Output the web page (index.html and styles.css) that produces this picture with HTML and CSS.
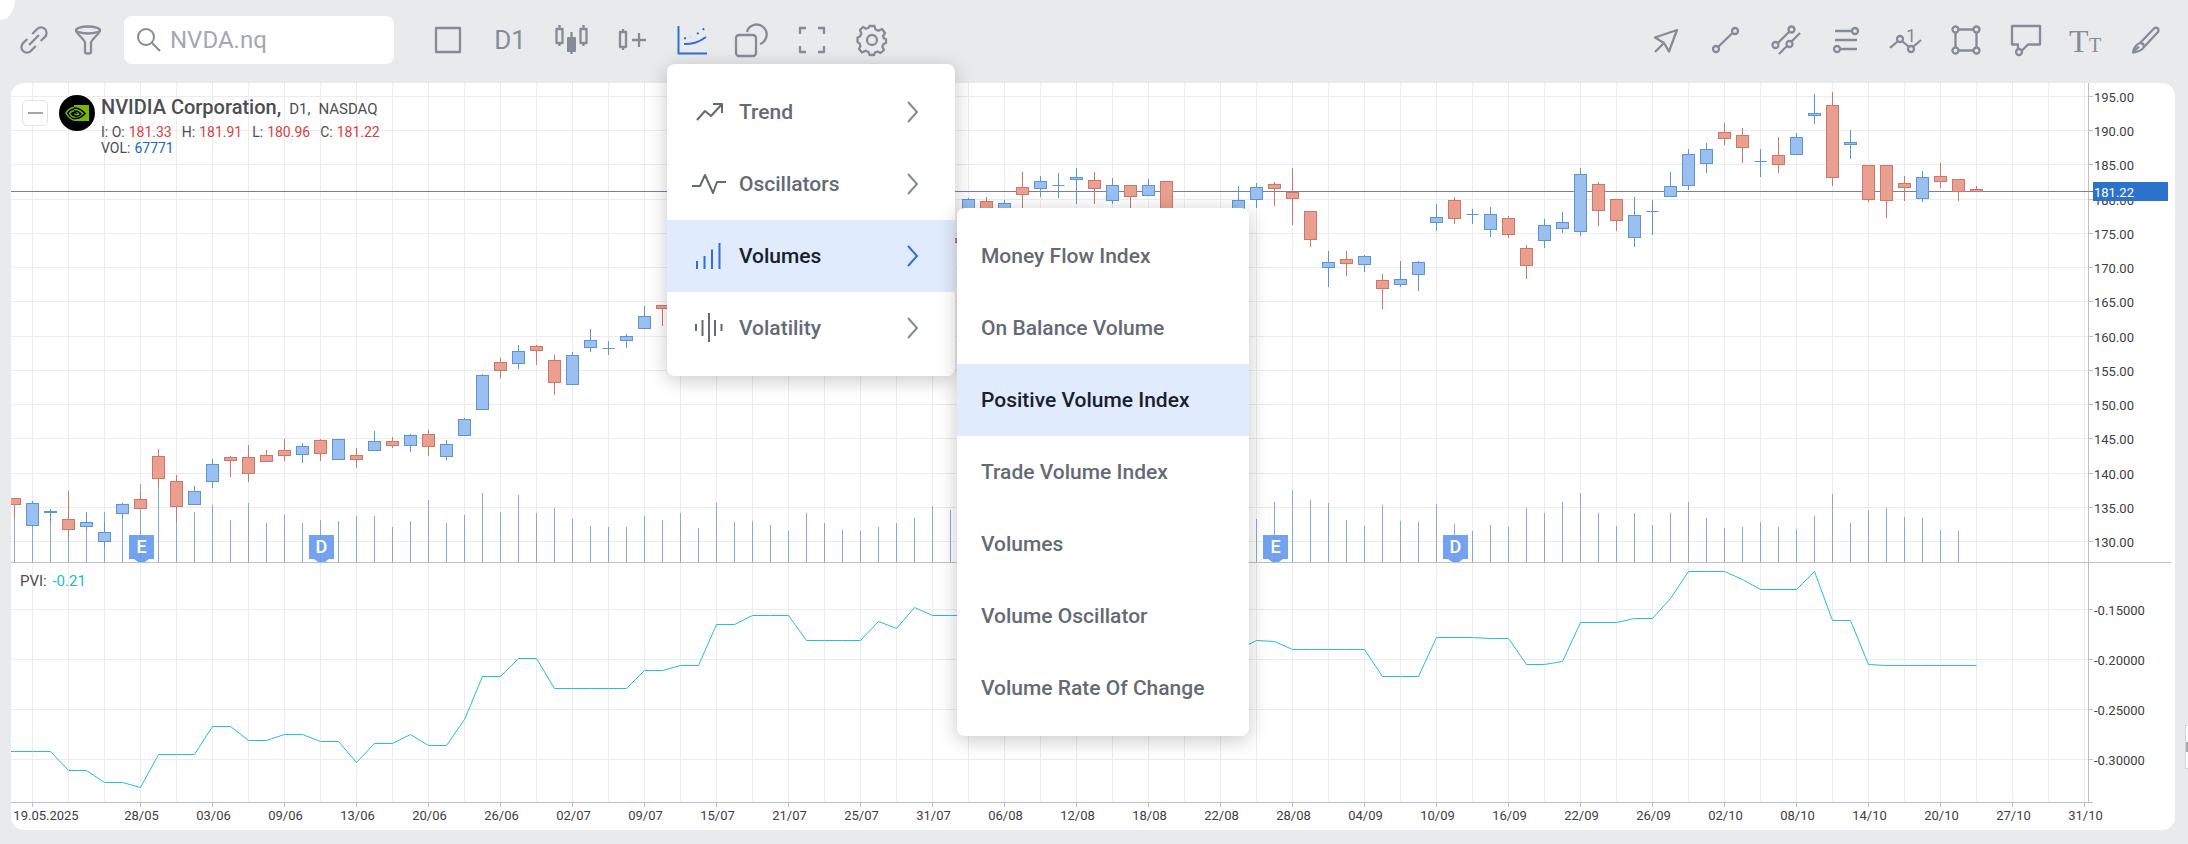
FILE: index.html
```
<!DOCTYPE html>
<html lang="en">
<head>
    <meta charset="UTF-8">
    <title>NVDA.nq chart</title>
    <link rel="stylesheet" href="styles.css">
</head>
<body>
    <div class="corner"></div>

    <header class="toolbar">
        <button class="tool tool-small" aria-label="Link">
            <svg class="icon" width="36" height="36"><g transform="rotate(-45 18 18)"><path d="M14 12.500H8a5.500 5.500 0 0 0 0 11h7M21 12.500h7a5.500 5.500 0 0 1 0 11h-6M11 18h14"/></g></svg>
        </button>
        <button class="tool tool-small" aria-label="Filter">
            <svg class="icon" width="36" height="36"><ellipse cx="18" cy="8" rx="12" ry="3.500"/><path d="M6 8c0 4 9 9 9 13v9c0 2 6 2 6 0V21c0-4 9-9 9-13"/></svg>
        </button>
        <label class="search">
            <svg class="icon" width="26" height="26"><circle cx="10" cy="10" r="8"/><path d="M15.500 15.500l8.500 8.500"/></svg>
            <input type="text" placeholder="NVDA.nq" aria-label="Symbol">
        </label>
        <button class="tool" aria-label="Layout">
            <svg class="icon" width="36" height="36"><path d="M6 6h24v24H6z"/></svg>
        </button>
        <button class="tool tool-period">D1</button>
        <button class="tool" aria-label="Chart type">
            <svg class="icon" width="36" height="36"><path d="M2.500 7h6v14h-6zM5.500 3v4M5.500 21v3M26.500 7h6v14h-6zM29.500 3v4M29.500 21v3M17.500 10v22"/><rect class="solid" x="13" y="15" width="9" height="15" rx="1"/></svg>
        </button>
        <button class="tool" aria-label="New candle">
            <svg class="icon" width="36" height="36"><path d="M6 10h6v15H6zM9 7v3M9 25v3M18 18h14M25 11v14"/></svg>
        </button>
        <div class="menu-anchor">
            <button class="tool tool-active" aria-label="Indicators">
                <svg class="icon" width="36" height="36"><path d="M4.500 4v27.500H33"/><path d="M10 22c8 0 14-1 22-7"/><path class="dots" d="M10 16.500L17 15M23 12L31 6"/></svg>
            </button>
            <nav class="menu">
                <button class="menu-item">
                    <svg class="icon" width="36" height="32"><path d="M6 24l8-9 6 5 11-12M22 8h9v9"/></svg>
                    <span>Trend</span>
                    <svg class="chevron" width="12" height="22"><path d="M1 1l9 10-9 10"/></svg>
                </button>
                <button class="menu-item">
                    <svg class="icon" width="36" height="32"><path d="M1 18h8l5-11 8 18 4-11h9"/></svg>
                    <span>Oscillators</span>
                    <svg class="chevron" width="12" height="22"><path d="M1 1l9 10-9 10"/></svg>
                </button>
                <button class="menu-item selected">
                    <svg class="icon" width="36" height="32"><path d="M6 21v8M13.500 16v13M21 9.500V29M28.500 3v26"/></svg>
                    <span>Volumes</span>
                    <svg class="chevron" width="12" height="22"><path d="M1 1l9 10-9 10"/></svg>
                </button>
                <button class="menu-item">
                    <svg class="icon" width="36" height="32"><path d="M5 12v7M11.500 8v16M18 1v29M24 8v16M30.500 12v7"/></svg>
                    <span>Volatility</span>
                    <svg class="chevron" width="12" height="22"><path d="M1 1l9 10-9 10"/></svg>
                </button>

                <div class="menu submenu">
                    <button class="menu-item">Money Flow Index</button>
                    <button class="menu-item">On Balance Volume</button>
                    <button class="menu-item selected">Positive Volume Index</button>
                    <button class="menu-item">Trade Volume Index</button>
                    <button class="menu-item">Volumes</button>
                    <button class="menu-item">Volume Oscillator</button>
                    <button class="menu-item">Volume Rate Of Change</button>
                </div>
            </nav>
        </div>
        <button class="tool" aria-label="Shapes">
            <svg class="icon" width="36" height="36"><rect x="2" y="13" width="20" height="21" rx="3"/><path d="M13 10a10 10 0 1 1 13 12"/></svg>
        </button>
        <button class="tool" aria-label="Fullscreen">
            <svg class="icon" width="36" height="36"><path d="M6 12V6h6M24 6h6v6M30 24v6h-6M12 30H6v-6"/></svg>
        </button>
        <button class="tool" aria-label="Settings">
            <svg class="icon" width="36" height="36"><circle cx="18" cy="18" r="5"/><path d="M15.500 4h5l1 3.500 3 1.300L28 7l3 4-2 3 1 2.500 2 .5v4l-2.500 1-1.200 2.800L30 28l-3.500 3-3-1.500-2.500 1L20 33h-4.500l-1-3-3-1.300L8 30.500 5 27l1.500-3-1-2.600L3.500 20v-4.500l2.500-1 1.300-3L6 8l3-3 3 1.700 2.600-1z"/></svg>
        </button>

        <div class="drawing-tools">
            <button class="tool" aria-label="Cursor">
                <svg class="icon" width="36" height="36"><path d="M7 30l9-9M16 21L7 15.500 29 8l-8 21.500z"/></svg>
            </button>
            <button class="tool" aria-label="Line">
                <svg class="icon" width="36" height="36"><path d="M10 25L24.500 11"/><circle cx="8" cy="27" r="3"/><circle cx="27" cy="9" r="3"/></svg>
            </button>
            <button class="tool" aria-label="Channel">
                <svg class="icon" width="36" height="36"><path d="M10 21L21 10M11 32l8-8M23 20l9-9"/><circle cx="7.500" cy="23" r="3"/><circle cx="23.500" cy="7.500" r="3"/><circle cx="21.500" cy="22" r="3"/></svg>
            </button>
            <button class="tool" aria-label="Fibonacci levels">
                <svg class="icon" width="36" height="36"><path d="M7 9h17M7 18h22M12 27h17"/><circle cx="27" cy="9" r="3"/><circle cx="9" cy="27" r="3"/></svg>
            </button>
            <button class="tool" aria-label="Waves">
                <svg class="icon" width="36" height="36"><path d="M2 26l8-7M14 19l7 6M25 25l8-7"/><circle cx="12" cy="17" r="3"/><circle cx="23" cy="27" r="3"/><text x="18" y="20" font-size="18">1</text></svg>
            </button>
            <button class="tool" aria-label="Rectangle">
                <svg class="icon" width="36" height="36"><path d="M10 7.500h16M10 28.500h16M7.500 10v16M28.500 10v16"/><circle cx="7.500" cy="7.500" r="3"/><circle cx="28.500" cy="7.500" r="3"/><circle cx="7.500" cy="28.500" r="3"/><circle cx="28.500" cy="28.500" r="3"/></svg>
            </button>
            <button class="tool" aria-label="Comment">
                <svg class="icon" width="36" height="36"><path d="M10 27v-4.500H4V4h28v18.500H20L13.500 29"/><circle cx="11" cy="30" r="3"/></svg>
            </button>
            <button class="tool" aria-label="Text">
                <svg class="icon" width="36" height="36"><text class="type" x="1" y="30" font-size="32">T</text><text class="type" x="21" y="30" font-size="20">T</text></svg>
            </button>
            <button class="tool" aria-label="Brush">
                <svg class="icon" width="36" height="36"><path d="M12 21L26 6.500c3-2 5.500.5 4 3.500L16 25M12 21c2.500 0 4 1.500 4 4-2.500 4-6 5-11 5.500C5.500 27 8 22 12 21zM5 30.500l6-6"/></svg>
            </button>
        </div>
    </header>

    <main class="chart">
        <section class="pane">
            <svg class="plot" id="pricePlot" height="479"></svg>
            <svg class="scale" id="priceScale" height="479"></svg>
            <div class="legend">
                <button class="collapse" aria-label="Collapse"></button>
                <svg class="logo" width="36" height="36">
                    <circle cx="18" cy="18" r="18"/>
                    <path class="green" d="M15 10h15v16H15z"/>
                    <path class="green-line" d="M15 12.500C11 13 8.500 15.500 7 18c2 4 5 6.500 9 7.500M15 15.500c-2 .5-3.500 1.500-4.500 3 1 2 3 3.500 5 4"/>
                    <path class="dark-line" d="M15 13c5 0 8.500 2.500 11 5.500-3 3.500-6.500 5.500-11 5M15 16c3.500-.5 5.500 1 7 3-2 2-4 2.500-6 2-1.500-1-2-2-1.500-3 1.500-.5 3 0 3.500 1"/>
                </svg>
                <div>
                    <div class="legend-title"><h1>NVIDIA Corporation,</h1><span>D1,</span><span>NASDAQ</span></div>
                    <dl class="quote">
                        <div><dt>I: O:</dt><dd>181.33</dd></div>
                        <div><dt>H:</dt><dd>181.91</dd></div>
                        <div><dt>L:</dt><dd>180.96</dd></div>
                        <div><dt>C:</dt><dd>181.22</dd></div>
                    </dl>
                    <dl class="quote volume"><div><dt>VOL:</dt><dd>67771</dd></div></dl>
                </div>
            </div>
        </section>
        <section class="pane pane-pvi">
            <svg class="plot" id="pviPlot" height="239"></svg>
            <svg class="scale" id="pviScale" height="239"></svg>
            <div class="pvi-legend">PVI: <span>-0.21</span></div>
        </section>
        <svg class="time-axis" id="timeAxis" height="28"></svg>
    </main>

    <button class="side-handle" aria-label="Open panel"></button>

    <script src="chart.js"></script>
</body>
</html>
```
FILE: styles.css
```
* {
    box-sizing: border-box;
}

body {
    margin: 0;
    min-height: 100vh;
    padding: 0 13px 14px 11px;
    background: #e8eaec;
    font-family: Roboto, "Liberation Sans", sans-serif;
    color: #4c4e52;
    position: relative;
    overflow-x: hidden;
}

button {
    font-family: inherit;
    border: none;
    background: none;
    padding: 0;
    cursor: pointer;
}

.corner {
    position: absolute;
    left: 0;
    top: 0;
    width: 15px;
    height: 20px;
    background: #fff;
    border-bottom-right-radius: 15px 20px;
}

/* toolbar */
.toolbar {
    display: flex;
    align-items: flex-start;
    height: 83px;
    padding-top: 10px;
    margin: 0 -1px 0 -4px;
}

.tool {
    display: flex;
    align-items: center;
    justify-content: center;
    width: 60px;
    height: 60px;
    color: #868c97;
}

.tool-small {
    width: 54px;
}

.tool-period {
    width: 64px;
    font-size: 26px;
    font-weight: 400;
}

.tool-active {
    color: #2f6fdb;
}

.icon {
    fill: none;
    stroke: currentColor;
    stroke-width: 2px;
    stroke-linejoin: round;
    flex: none;
    overflow: visible;
}

.toolbar > .tool .icon,
.drawing-tools .icon {
    stroke-width: 2.3px;
}

.icon .solid {
    fill: currentColor;
    stroke: none;
}

.icon .dots {
    stroke-dasharray: 2 5;
}

.icon text {
    fill: currentColor;
    stroke: none;
}

.icon .type {
    font-family: "Liberation Serif", serif;
}

.search {
    display: flex;
    align-items: center;
    gap: 8px;
    width: 270px;
    height: 48px;
    margin: 6px 24px 0 9px;
    padding: 0 12px;
    border-radius: 8px;
    background: #fff;
    color: #868c97;
}

.search input {
    flex: 1;
    min-width: 0;
    border: none;
    outline: none;
    padding: 0;
    font-family: inherit;
    font-size: 24px;
}

.search input::placeholder {
    color: #a4a8b0;
}

.drawing-tools {
    display: flex;
    margin-left: auto;
}

/* dropdown menus */
.menu-anchor {
    position: relative;
}

.menu {
    position: absolute;
    z-index: 2;
    left: 5px;
    top: 54px;
    width: 288px;
    padding: 12px 0;
    border-radius: 8px;
    background: #fff;
    box-shadow: 0 4px 20px rgba(0, 0, 0, 0.22);
}

.submenu {
    left: 290px;
    top: 144px;
    width: 292px;
}

.menu-item {
    display: flex;
    align-items: center;
    gap: 12px;
    width: 100%;
    height: 72px;
    padding: 0 36px 0 24px;
    font-size: 21px;
    font-weight: 500;
    text-align: left;
    color: #646a73;
}

.menu-item.selected {
    background: #e0ebfd;
    color: #18202c;
}

.chevron {
    margin-left: auto;
    fill: none;
    stroke: #858b95;
    stroke-width: 2px;
}

.selected .icon,
.selected .chevron {
    stroke: #2f6fdb;
}

/* chart */
.chart {
    background: #fff;
    border-radius: 13px;
    overflow: hidden;
}

.pane {
    position: relative;
    display: flex;
    padding-bottom: 1px;
}

.pane::after {
    content: "";
    position: absolute;
    left: 0;
    right: 4px;
    bottom: 0;
    border-bottom: 1px solid #bcc0c4;
}

.pane-pvi::after {
    right: 82px;
}

.plot {
    display: block;
    flex: 1;
    min-width: 0;
}

.scale {
    display: block;
    width: 87px;
    flex: none;
}

.time-axis {
    display: block;
    width: 100%;
    height: 27px;
}

.grid {
    stroke: #ececee;
}

.axis {
    stroke: #bcc0c4;
}

.scale text,
.time-axis text {
    font-size: 13px;
    fill: #3e4043;
}

.time-axis text {
    text-anchor: middle;
}

.up {
    fill: #9abff0;
    stroke: #5b95d3;
}

.down {
    fill: #ea9f90;
    stroke: #ca7868;
}

.volume-bar {
    stroke: #88aad9;
}

.price-line {
    stroke: #7d7f95;
}

.price-tag {
    fill: #2a72cc;
}

.scale .price-tag-text {
    fill: #fff;
}

.event {
    fill: #6499ee;
    fill-opacity: 0.9;
}

.event-text {
    fill: #fff;
    font-size: 18px;
    font-weight: 500;
    text-anchor: middle;
}

.pvi-line {
    fill: none;
    stroke: #27bed2;
}

/* legends */
.legend {
    position: absolute;
    left: 11px;
    top: 12px;
    display: flex;
    align-items: flex-start;
}

.collapse {
    width: 26px;
    height: 26px;
    margin: 5px 11px 0 0;
    border: 1px solid #e2e3e8;
    border-radius: 5px;
    background: #fff;
}

.collapse::before {
    content: "";
    display: block;
    width: 15px;
    height: 2px;
    margin: auto;
    background: #a4a7b2;
}

.logo {
    margin-right: 6px;
}

.logo .green {
    fill: #78b800;
}

.logo .green-line,
.logo .dark-line {
    fill: none;
    stroke: #78b800;
    stroke-width: 1.5px;
}

.logo .dark-line {
    stroke: #000;
}

.legend-title {
    display: flex;
    align-items: baseline;
    gap: 8px;
    line-height: 24px;
    font-size: 15px;
}

.legend-title h1 {
    margin: 0;
    font-size: 20px;
    font-weight: 500;
}

.quote {
    display: flex;
    gap: 10px;
    margin: 0;
    padding-top: 3px;
    font-size: 14px;
    line-height: 16px;
}

.quote div {
    display: flex;
    gap: 4px;
}

.quote dd {
    margin: 0;
    color: #d94040;
}

.volume {
    padding-top: 0;
}

.volume dd {
    color: #2463cc;
}

.pvi-legend {
    position: absolute;
    left: 9px;
    top: 9px;
    font-size: 15px;
    line-height: 18px;
}

.pvi-legend span {
    margin-left: 2px;
    color: #1bbcd6;
}

.side-handle {
    position: absolute;
    right: 0;
    top: 725px;
    width: 3px;
    height: 44px;
    border: 1px solid #d0d2d5;
    border-right: none;
    background: #fff;
}

.side-handle::before {
    content: "";
    display: block;
    height: 10px;
    background: #aaa;
}
```
FILE: chart.js
```
const SVG = 'http://www.w3.org/2000/svg';
const STEP = 18;
const PRICE_TOP = 83;
const PVI_TOP = 563;

// one row per day: high, body top, body bottom, low, volume top, 1 = up / 0 = down
const days = [
    [498,498,504,517,516,0],[501,503,525,526,524,1],[509,511,512,522,520,1],[491,519,529,537,528,0],
    [512,522,526,530,524,1],[522,532,541,547,512,1],[503,504,513,518,514,1],[491,499,508,508,484,0],
    [449,456,478,487,487,0],[475,481,506,521,520,0],[486,491,504,504,512,1],[459,464,481,487,505,1],
    [456,457,460,476,520,0],[445,457,473,481,503,0],[450,455,461,461,523,0],[439,450,455,460,515,0],
    [443,446,454,462,523,1],[439,440,453,460,520,0],[439,439,459,459,521,1],[448,455,459,467,516,0],
    [431,441,450,450,516,1],[437,441,445,447,527,0],[434,435,445,451,521,1],[430,434,446,455,500,0],
    [440,444,456,459,523,1],[418,419,435,435,515,1],[374,375,409,409,493,1],[358,362,370,377,512,0],
    [345,351,363,368,495,1],[345,346,350,364,513,0],[355,360,382,394,508,0],[352,355,384,384,519,1],
    [329,340,347,351,526,1],[341,348,348,354,527,1],[334,336,340,347,527,1],[306,316,328,328,516,1],
    [305,305,308,325,520,0],[280,285,296,300,513,1],[276,280,290,295,528,1],[262,268,282,288,503,1],
    [258,262,270,276,522,1],[250,256,264,270,521,1],[250,254,262,266,525,0],[252,258,264,270,531,0],
    [246,250,258,262,513,1],[240,246,254,258,523,1],[240,244,252,256,530,0],[232,238,246,252,531,1],
    [228,232,240,246,527,1],[226,230,238,242,523,0],[218,222,234,240,518,1],[212,218,230,238,506,0],
    [236,238,242,260,510,0],[198,199,215,220,520,1],[197,201,212,218,522,0],[200,203,215,220,524,1],
    [172,187,194,207,520,0],[176,181,188,196,522,1],[173,185,185,197,524,1],[168,177,179,203,520,1],
    [172,180,188,203,522,0],[178,185,200,203,523,1],[185,185,196,212,525,0],[179,185,195,195,521,1],
    [181,181,215,220,510,0],[210,215,225,232,515,1],[212,218,230,236,518,0],[208,214,226,232,520,0],
    [186,200,215,220,518,1],[183,187,199,207,519,1],[182,184,188,205,502,0],[168,192,198,224,490,0],
    [211,211,239,246,500,0],[251,262,267,286,503,1],[251,259,263,275,520,0],[255,256,264,271,526,1],
    [274,280,288,308,505,0],[261,279,284,286,521,1],[261,262,274,290,522,1],[204,217,222,230,504,1],
    [197,200,218,223,524,0],[209,214,214,223,531,1],[207,214,229,236,525,1],[216,218,234,237,527,0],
    [245,248,265,278,508,0],[219,225,240,247,513,1],[212,222,228,232,502,1],[168,174,231,235,493,1],
    [182,184,210,225,513,0],[199,199,220,230,526,0],[197,215,237,246,513,1],[200,211,211,234,525,1],
    [172,186,196,196,513,1],[149,154,185,189,502,1],[143,149,163,172,518,1],[123,132,138,144,528,0],
    [128,135,147,162,527,0],[149,161,161,176,522,1],[137,155,164,172,527,0],[133,137,154,154,529,1],
    [94,113,115,123,516,1],[92,105,177,185,494,0],[130,142,144,158,523,1],[165,165,199,201,510,0],
    [165,165,200,217,508,0],[176,183,187,200,517,0],[171,177,198,201,518,1],[163,176,181,187,530,0],
    [179,179,191,200,531,0],[186,189,191,191,562,0]
];

const pvi = [
    751,751,751,770,770,782,782,787,754,754,754,726,726,740,740,734,734,741,741,762,743,743,734,745,745,
    719,676,676,658,658,688,688,688,688,688,670,670,665,665,624,624,615,615,615,640,640,640,640,621,628,
    607,615,615,615,620,620,630,630,630,640,640,640,650,650,650,655,655,655,649,640,641,649,649,649,649,
    649,676,676,676,637,637,637,638,638,664,664,661,622,622,622,618,618,598,571,571,571,579,589,589,589,
    571,620,620,664,665,665,665,665,665,665
];

const dates = ['28/05','03/06','09/06','13/06','20/06','26/06','02/07','09/07','15/07','21/07','25/07',
    '31/07','06/08','12/08','18/08','22/08','28/08','04/09','10/09','16/09','22/09','26/09','02/10',
    '08/10','14/10','20/10','27/10','31/10'];

const events = [[7, 'E'], [17, 'D'], [70, 'E'], [80, 'D']];

const pricePlot = document.getElementById('pricePlot');
const priceScale = document.getElementById('priceScale');
const pviPlot = document.getElementById('pviPlot');
const pviScale = document.getElementById('pviScale');
const timeAxis = document.getElementById('timeAxis');

function add(parent, tag, attrs, text) {
    const el = document.createElementNS(SVG, tag);
    for (const name in attrs) el.setAttribute(name, attrs[name]);
    if (text) el.textContent = text;
    parent.appendChild(el);
}

function line(parent, cls, x1, y1, x2, y2) {
    add(parent, 'line', { class: cls, x1: x1, y1: y1, x2: x2, y2: y2 });
}

function dayX(i) {
    return 3.5 + i * STEP;
}

// grid
for (let i = 1; dayX(i) < pricePlot.clientWidth; i += 2) {
    line(pricePlot, 'grid', dayX(i), 0, dayX(i), 479);
    line(pviPlot, 'grid', dayX(i), 0, dayX(i), 239);
}

line(priceScale, 'axis', 0.5, 0, 0.5, 479);
line(pviScale, 'axis', 0.5, 0, 0.5, 239);

for (let price = 195; price >= 130; price -= 5) {
    const y = Math.floor(13.5 + (195 - price) * 6.846) + 0.5;
    line(pricePlot, 'grid', 0, y, '100%', y);
    line(priceScale, 'axis', 0, y, 5, y);
    add(priceScale, 'text', { x: 6, y: y + 5.5 }, price.toFixed(2));
}

for (let n = 0; n < 4; n++) {
    const y = 46.5 + n * 50;
    line(pviPlot, 'grid', 0, y, '100%', y);
    line(pviScale, 'axis', 0, y, 5, y);
    add(pviScale, 'text', { x: 6, y: y + 5.5 }, (-0.15 - n * 0.05).toFixed(5));
}

// current price
line(pricePlot, 'price-line', 0, 108.5, '100%', 108.5);
line(priceScale, 'price-line', 0, 108.5, 5, 108.5);
add(priceScale, 'rect', { class: 'price-tag', x: 5, y: 99, width: 75, height: 19 });
add(priceScale, 'text', { class: 'price-tag-text', x: 6, y: 114 }, '181.22');

// volume and candles
days.forEach(function (day, i) {
    const x = dayX(i);
    line(pricePlot, 'volume-bar', x, day[4] - PRICE_TOP, x, 479);
});

days.forEach(function (day, i) {
    const x = dayX(i);
    const cls = day[5] ? 'up' : 'down';
    line(pricePlot, cls, x, day[0] - PRICE_TOP, x, day[3] + 1 - PRICE_TOP);
    add(pricePlot, 'rect', {
        class: cls, x: x - 6, y: day[1] + 0.5 - PRICE_TOP, width: 12, height: day[2] - day[1]
    });
    if (day[1] === day[2]) {
        line(pricePlot, cls, x - 6, day[1] + 0.5 - PRICE_TOP, x + 6, day[1] + 0.5 - PRICE_TOP);
    }
});

events.forEach(function (event) {
    const x = dayX(event[0]) + 1;
    add(pricePlot, 'path', {
        class: 'event',
        d: 'M' + (x - 12.5) + ' 452h25v24h-5l-4 3h-7l-4-3h-5z'
    });
    add(pricePlot, 'text', { class: 'event-text', x: x, y: 469.5 }, event[1]);
});

// PVI
add(pviPlot, 'polyline', {
    class: 'pvi-line',
    points: '0,188.5 ' + pvi.map(function (y, i) {
        return dayX(i) + ',' + (y + 0.5 - PVI_TOP);
    }).join(' ')
});

// dates
line(timeAxis, 'axis', dayX(1), 0, dayX(1), 4);
add(timeAxis, 'text', { x: 35, y: 17 }, '19.05.2025');
dates.forEach(function (date, n) {
    const x = dayX(7 + n * 4);
    line(timeAxis, 'axis', x, 0, x, 4);
    add(timeAxis, 'text', { x: x + 1, y: 17 }, date);
});
```
